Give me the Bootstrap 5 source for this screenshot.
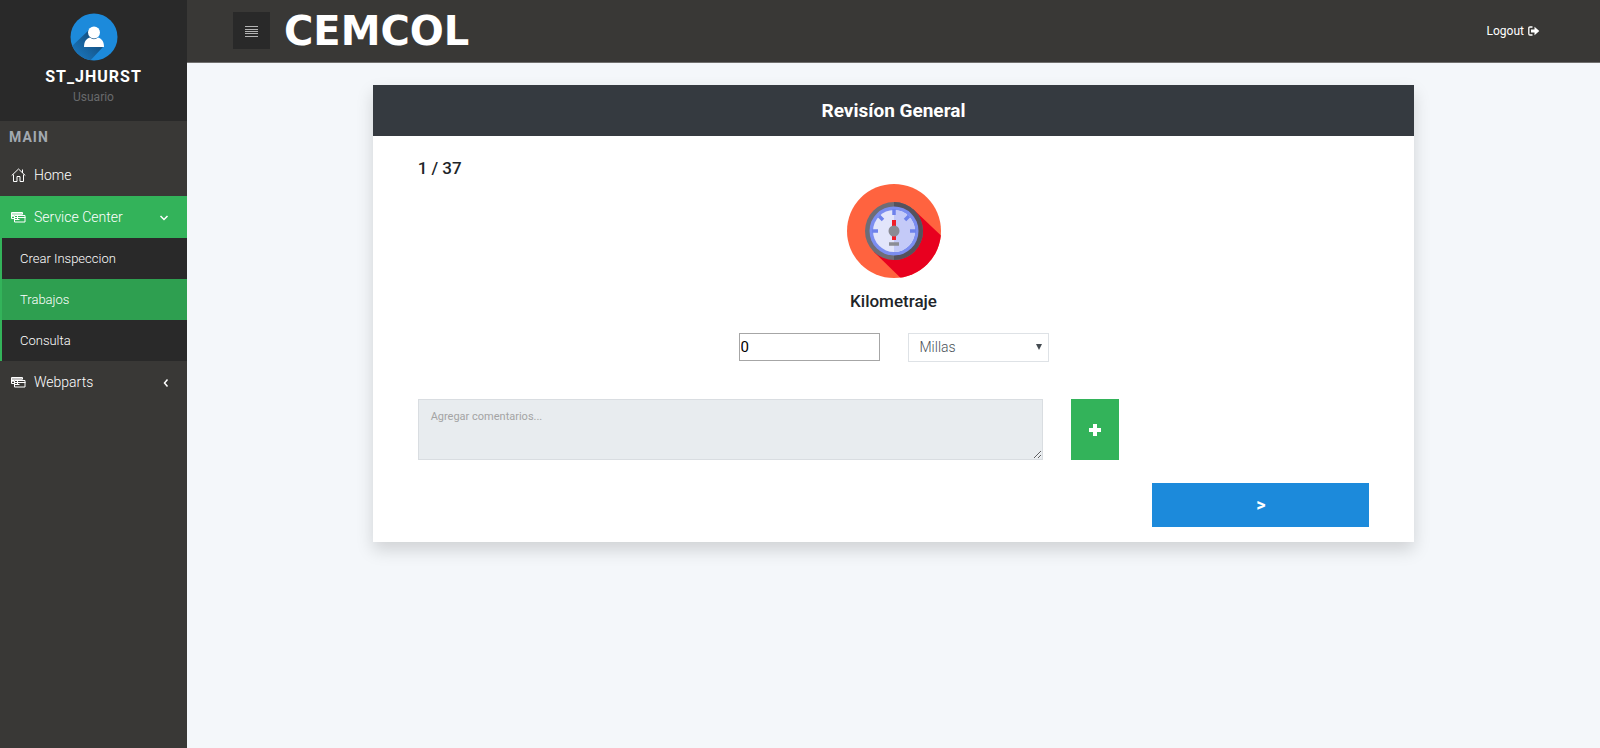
<!DOCTYPE html>
<html lang="es">
<head>
<meta charset="utf-8">
<meta name="viewport" content="width=device-width, initial-scale=1">
<title>CEMCOL - Revisíon General</title>
<link href="https://cdn.jsdelivr.net/npm/bootstrap@5.3.0/dist/css/bootstrap.min.css" rel="stylesheet">
<style>
  body { font-family: Roboto, "Liberation Sans", sans-serif; background: #f4f7fa; color: #212529; font-size: 14px; }
  .side-navbar { width: 187px; background: #393836; }
  .side-header { background: #292929; height: 121px; padding-top: 13px; }
  .user-name { font-size: 16px; line-height: 18px; font-weight: 700; letter-spacing: 1px; margin-top: 7px; }
  .user-role { font-size: 12px; line-height: 16px; color: #686a6c; margin-top: 3px; }
  .menu-title { font-size: 14px; line-height: 20px; font-weight: 700; letter-spacing: 1px; color: #a2a9b0; padding: 6px 9px 7px; }
  .side-link { display: flex; align-items: center; gap: 8px; height: 42px; padding: 0 18px 0 11px; color: #fff; font-weight: 300; line-height: 20px; text-decoration: none; }
  .side-link.current { background: #33b35a; }
  .sub-menu { border-left: 2px solid #33b35a; background: #292929; }
  .sub-link { display: block; height: 41px; padding: 0 18px; line-height: 41px; font-size: 13px; color: #fff; font-weight: 300; text-decoration: none; }
  .sub-link.current { background: #2e9f50; }
  .top-bar { height: 63px; padding: 0 60px 1px 46px; background: #393836; border-bottom: 1px solid #706f6e; }
  .toggle-btn { width: 37px; height: 37px; background: #292929; border: 0; }
  .brand-name { font: 700 40px/40px "DejaVu Sans", sans-serif; color: #fff; text-decoration: none; margin-left: 14px; }
  .logout { font-size: 12px; color: #fff; text-decoration: none; }
  .review-card { margin-top: 22px; background: #fff; box-shadow: 0 8px 16px rgba(0,0,0,.15); }
  .review-title { background: #353a40; color: #fff; font-size: 19px; font-weight: 700; line-height: 51px; }
  .review-body { padding: 22px 45px 15px; }
  .step-text { font-size: 17px; line-height: 20px; font-weight: 500; }
  .gauge { margin-top: 6px; }
  .gauge-label { margin-top: 13px; }
  .field-row { gap: 28px; margin-top: 22px; }
  .km-input { width: 141px; height: 28px; border: 1px solid #a6a6a6; padding: 1px; font-size: 15px; color: #000; border-radius: 0; }
  .unit-select { width: 141px; height: 29px; border: 1px solid #dee2e6; padding: 0 11px; font-size: 14px; font-weight: 300; color: #495057; background: #fff; appearance: none; border-radius: 0; }
  .select-caret { right: 6px; top: 10px; pointer-events: none; }
  .form-row { --bs-gutter-x: 28px; }
  .comment-row { margin-top: 37px; }
  .comment-box { display: block; width: 100%; height: 61px; border: 1px solid #d9dde1; background: #e8ecef; padding: 8px 12px; font-size: 11px; line-height: 18px; border-radius: 0; resize: vertical; }
  .comment-box::placeholder { color: #a4a4a4; opacity: 1; }
  .add-btn { width: 48px; height: 61px; border: 0; background: #33b35a; color: #fff; }
  .next-row { margin-top: 23px; }
  .next-btn { width: 100%; height: 44px; border: 0; background: #1c8adb; color: #fff; font-size: 18px; font-weight: 700; line-height: 20px; }
</style>
</head>
<body>
<div class="d-flex min-vh-100">
  <nav class="side-navbar flex-shrink-0" aria-label="Menú">
    <div class="side-header text-center">
      <svg class="d-block mx-auto" width="48" height="48" viewBox="0 0 48 48" aria-hidden="true">
        <defs>
          <linearGradient id="fade" x1="1" y1="0" x2="0" y2="1"><stop offset=".3" stop-color="#145488"/><stop offset="1" stop-color="#1c82cf"/></linearGradient>
          <clipPath id="disc"><circle cx="24" cy="24" r="23.5"/></clipPath>
        </defs>
        <circle cx="24" cy="24" r="23.5" fill="#1c8adb"/>
        <path d="M20 16 0 35 18 50 33 34z" fill="url(#fade)" clip-path="url(#disc)"/>
        <path d="M14 34c0-5 2-8.500 6-9.500q4 3.500 8 0c4 1 6 4.500 6 9.500z" fill="#fff"/>
        <circle cx="24" cy="19.500" r="6" fill="#fff"/>
      </svg>
      <div class="user-name text-white">ST_JHURST</div>
      <div class="user-role">Usuario</div>
    </div>
    <div class="menu-title">MAIN</div>
    <a class="side-link" href="#">
      <svg width="15" height="15" viewBox="0 0 15 15" fill="none" stroke="#fff" aria-hidden="true"><path d="M.7 7.500 7.500 1l6.800 6.500M2.500 6.500v7h3.500V8.500h3v5h3.500v-7M11.500 5V1.500"/></svg>
      <span>Home</span>
    </a>
    <a class="side-link current" href="#" aria-expanded="true">
      <svg width="15" height="15" viewBox="0 0 15 15" fill="none" stroke="#fff" aria-hidden="true"><path d="M.5 2.500h11v2M.5 2.500v6h2.500" /><path d="M.5 3.500h11M1 4.500h10M1 6.500h2" opacity=".7"/><path d="M3.500 5.500h10.500v6.500h-10.500zM3.500 7.500h11M6.500 5.500v4M3.500 9.500h5M1 5.500h2"/></svg>
      <span>Service Center</span>
      <svg class="ms-auto" width="10" height="10" viewBox="0 0 10 10" fill="none" stroke="#fff" stroke-width="1.500" aria-hidden="true"><path d="m1.500 4 3.500 3.500L8.500 4"/></svg>
    </a>
    <div class="sub-menu">
      <a class="sub-link" href="#">Crear Inspeccion</a>
      <a class="sub-link current" href="#">Trabajos</a>
      <a class="sub-link" href="#">Consulta</a>
    </div>
    <a class="side-link" href="#">
      <svg width="15" height="15" viewBox="0 0 15 15" fill="none" stroke="#fff" aria-hidden="true"><path d="M.5 2.500h11v2M.5 2.500v6h2.500" /><path d="M.5 3.500h11M1 4.500h10M1 6.500h2" opacity=".7"/><path d="M3.500 5.500h10.500v6.500h-10.500zM3.500 7.500h11M6.500 5.500v4M3.500 9.500h5M1 5.500h2"/></svg>
      <span>Webparts</span>
      <svg class="ms-auto" width="6" height="10" viewBox="0 0 6 10" fill="none" stroke="#fff" stroke-width="1.500" aria-hidden="true"><path d="M4.500 2.500 1.500 6l3 3.500"/></svg>
    </a>
  </nav>
  <div class="flex-grow-1">
    <header class="top-bar d-flex align-items-center">
      <button class="toggle-btn d-flex align-items-center justify-content-center" type="button" aria-label="Menú">
        <svg width="13" height="15" viewBox="0 0 13 15" stroke="#b4b4b4" aria-hidden="true"><path d="M0 3.500h13M0 6.500h13M0 8.500h13M0 10.500h13M0 13.500h13"/></svg>
      </button>
      <a class="brand-name" href="#">CEMCOL</a>
      <a class="logout d-flex align-items-center gap-1 ms-auto" href="#">Logout
        <svg width="12" height="10" viewBox="0 0 12 10" aria-hidden="true"><path d="M4.500 1H2Q.8 1 .8 2.200v5.600Q.8 9 2 9h2.500" fill="none" stroke="#fff" stroke-width="1.300"/><path d="M3 3.500h3.500V.8L11.300 5 6.500 9.200V6.500H3z" fill="#fff"/></svg>
      </a>
    </header>
    <main class="container-fluid">
      <div class="row g-0 justify-content-center">
        <section class="col-9 review-card">
          <h1 class="review-title text-center mb-0">Revisíon General</h1>
          <div class="review-body">
            <div class="step-text">1 / 37</div>
            <div class="text-center">
              <svg class="gauge d-block mx-auto" width="94" height="94" viewBox="0 0 94 94" aria-hidden="true">
                <clipPath id="plate"><circle cx="47" cy="47" r="47"/></clipPath>
                <circle cx="47" cy="47" r="47" fill="#ff633f"/>
                <path d="m66 25 40 38-40 43-39-38z" fill="#e8001f" clip-path="url(#plate)"/>
                <circle cx="47" cy="47" r="29" fill="#6e6d76"/>
                <path d="M47 18a29 29 0 0 1 0 58z" fill="#55525c"/>
                <circle cx="47" cy="47" r="24.500" fill="#7b8df0"/>
                <circle cx="47" cy="47" r="21" fill="#e2e5fb"/>
                <path d="M47 26a21 21 0 0 1 0 42z" fill="#c4caf8"/>
                <path d="M47 25v6M25 47h6M63 47h6M32 32l4 4M62 32l-4 4" stroke="#6e82ec" stroke-width="3.500"/>
                <path d="M47 36v20" stroke="#f11d28" stroke-width="4"/>
                <circle cx="47" cy="47" r="5.500" fill="#898b94"/>
                <path d="M42 60h10" stroke="#8b8d95" stroke-width="3.500"/>
              </svg>
              <label class="gauge-label step-text d-block" for="km">Kilometraje</label>
            </div>
            <div class="field-row d-flex justify-content-center">
              <input class="km-input" id="km" type="text" value="0">
              <div class="position-relative">
                <select class="unit-select" aria-label="Unidad"><option>Millas</option><option>Kilómetros</option></select>
                <svg class="select-caret position-absolute" width="8" height="8" viewBox="0 0 8 8" aria-hidden="true"><path d="M1 1h6L4 7z" fill="#444b51"/></svg>
              </div>
            </div>
            <div class="row form-row comment-row">
              <div class="col-8"><textarea class="comment-box" placeholder="Agregar comentarios..." aria-label="Comentarios"></textarea></div>
              <div class="col-auto">
                <button class="add-btn d-flex align-items-center justify-content-center" type="button" aria-label="Agregar">
                  <svg width="12" height="12" viewBox="0 0 12 12" stroke="#fff" stroke-width="4" aria-hidden="true"><path d="M0 6h12M6 0v12"/></svg>
                </button>
              </div>
            </div>
            <div class="row form-row next-row justify-content-end">
              <div class="col-3"><button class="next-btn" type="button">&gt;</button></div>
            </div>
          </div>
        </section>
      </div>
    </main>
  </div>
</div>
<script src="https://cdn.jsdelivr.net/npm/bootstrap@5.3.0/dist/js/bootstrap.bundle.min.js"></script>
</body>
</html>
